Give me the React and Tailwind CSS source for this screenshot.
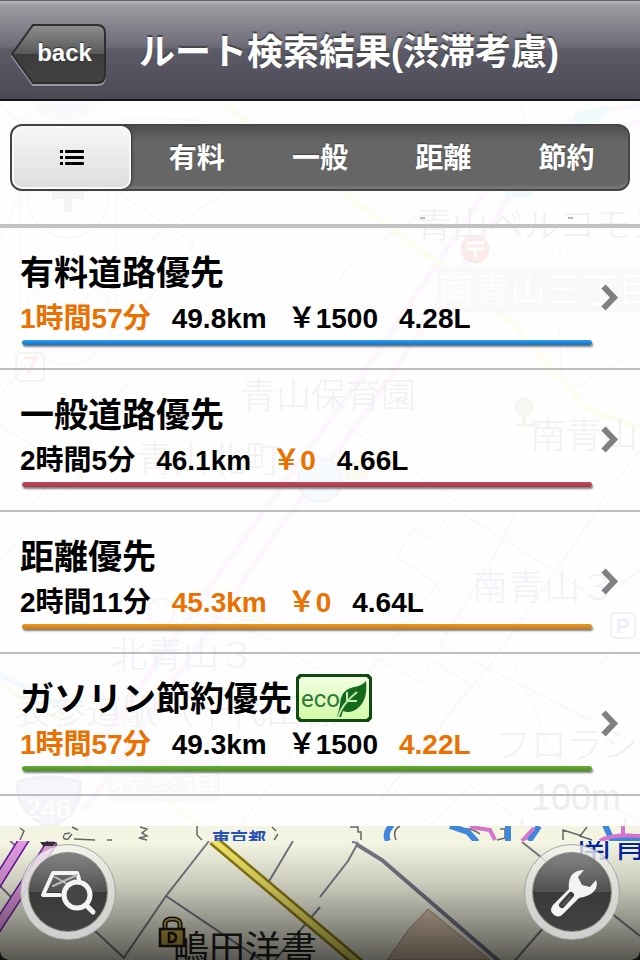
import { useState } from 'react'
import clsx from 'clsx'

const tabs = [
  { id: 'list', label: '一覧' },
  { id: 'toll', label: '有料' },
  { id: 'general', label: '一般' },
  { id: 'distance', label: '距離' },
  { id: 'saving', label: '節約' }
]

const routes = [
  {
    title: '有料道路優先',
    bar: 'from-[#2f9ff0] to-[#0a72c8]',
    info: [
      { text: '1時間57分', best: true },
      { text: '49.8km' },
      { text: '￥1500' },
      { text: '4.28L' }
    ]
  },
  {
    title: '一般道路優先',
    bar: 'from-[#c9485c] to-[#a33a4b]',
    info: [
      { text: '2時間5分' },
      { text: '46.1km' },
      { text: '￥0', best: true },
      { text: '4.66L' }
    ]
  },
  {
    title: '距離優先',
    bar: 'from-[#ec9a26] to-[#c97a10]',
    info: [
      { text: '2時間11分' },
      { text: '45.3km', best: true },
      { text: '￥0', best: true },
      { text: '4.64L' }
    ]
  },
  {
    title: 'ガソリン節約優先',
    bar: 'from-[#62ad34] to-[#4a931f]',
    eco: true,
    info: [
      { text: '1時間57分', best: true },
      { text: '49.3km' },
      { text: '￥1500' },
      { text: '4.22L', best: true }
    ]
  }
]

function FadedMap() {
  return (
    <svg
      className="absolute inset-0 -z-10 h-full w-full"
      viewBox="0 0 640 960"
      preserveAspectRatio="xMidYMin slice"
      fill="none"
      aria-hidden="true"
    >
      {/* minor streets */}
      <g stroke="#f8f8f8" strokeWidth="1.5">
        <path d="M0 105 L18 120 L60 100 M120 118 L200 120 L230 190 L150 240 M60 100 L0 240 M140 310 L194 244 L70 160" />
        <path d="M0 395 L120 260 M0 425 L80 475 L0 560 M20 520 L130 380 M520 105 L530 130" />
        <path d="M330 290 Q360 250 420 215 M560 250 V330 L561 378 M575 388 L640 350 M345 425 L470 510 M595 510 L640 450 M450 512 L433 540 L414 529 L396 557 L438 584 L342 705" />
        <path d="M460 512 L600 600 L640 570 M515 512 L503 540 L440 645 L590 720 M595 514 L490 665 L380 800" strokeWidth="2" />
        <path d="M370 655 L420 682 L432 660 L470 684 L396 790 L430 825 L470 785 L520 820 M505 650 Q530 690 545 740 L590 800 L640 820 M590 680 L620 640" />
        <path d="M240 826 L330 700 M300 820 L320 830 M232 620 L320 670" />
      </g>

      {/* expressway */}
      <g stroke="#fcf7fd" strokeWidth="6">
        <path d="M640 105 Q540 118 500 170 L345 400 L250 530 L60 800" />
        <path d="M640 122 Q560 135 520 180 L375 400 L278 530 L85 810" />
      </g>
      <path d="M575 112 L610 106 L600 122 L575 124 Z M505 185 H532 V197 H505 Z" fill="#f0fafd" />

      {/* yellow road */}
      <path d="M225 105 L440 265 L515 325 Q560 380 590 410 L640 428" stroke="#fcfcf1" strokeWidth="6" />
      <path d="M0 685 L60 720 M160 795 L200 826" stroke="#fcfcf3" strokeWidth="5" />
      <path d="M0 675 L70 710" stroke="#f3f9fd" strokeWidth="6" />

      {/* map controls */}
      <circle cx="66" cy="80" r="36" stroke="#fafafb" strokeWidth="10" fill="#f7f9fe" />
      <circle cx="68" cy="198" r="40" stroke="#f9f9f9" strokeWidth="2" />
      <path d="M52 195 H84 M68 182 V212" stroke="#f4f4f4" strokeWidth="8" />
      <circle cx="68" cy="320" r="44" stroke="#fafafa" strokeWidth="3" />
      <path d="M20 190 V330 M117 190 V330" stroke="#fafafa" strokeWidth="2" />

      {/* markers */}
      <rect x="16" y="353" width="28" height="28" rx="4" stroke="#f2f4f2" strokeWidth="2" />
      <path d="M24 358 H36 L28 374" stroke="#fcf0ed" strokeWidth="3" />
      <circle cx="475" cy="249" r="14" fill="#fdeaea" stroke="#f4ecec" />
      <path d="M467 243 H484 M467 249 H484 M475 249 V258" stroke="#fff" strokeWidth="3" />
      <rect x="437" y="267" width="203" height="46" fill="#f9f9f9" />
      <circle cx="524" cy="407" r="9" fill="#f7f8f2" stroke="#f2f3ec" />
      <path d="M524 415 V425 M516 425 H540" stroke="#f3f4ed" strokeWidth="3" />
      <circle cx="320" cy="480" r="22" fill="#f6fafd" stroke="#f6f6fa" strokeWidth="3" />
      <rect x="346" y="462" width="22" height="17" fill="#fcfbf2" stroke="#f6f5ec" />
      <rect x="242" y="604" width="22" height="17" fill="#fcfbf2" stroke="#f6f5ec" />
      <circle cx="161" cy="612" r="13" stroke="#f7f5f9" strokeWidth="2" />
      <rect x="611" y="613" width="24" height="25" rx="4" stroke="#f1f1f1" strokeWidth="2" />
      <rect x="108" y="760" width="112" height="42" fill="#f9f9f9" />
      <path d="M18 782 Q48 772 80 782 Q84 812 50 828 Q14 812 18 782 Z" fill="#f5f5fa" stroke="#f2f2f6" strokeWidth="3" />
      <path d="M522 826 V818 M625 826 V818" stroke="#f3f3f3" strokeWidth="3" />

      {/* place names */}
      <g className="font-['Noto_Sans_CJK_JP',sans-serif]" fontSize="36" fontWeight="300" fill="#f1f1f1">
        <text x="416" y="238">青山ベルコモンズ</text>
        <text x="438" y="303" fill="#fff">南青山三丁目</text>
        <text x="241" y="408" fontSize="35">青山保育園</text>
        <text x="137" y="472">青山北町</text>
        <text x="530" y="448">南青山</text>
        <text x="472" y="600" fill="#f0f2fa">南青山３</text>
        <text x="111" y="668" fill="#f0f2fa">北青山３</text>
        <text x="14" y="724">表参道駅（千代田線</text>
        <text x="495" y="758">フロラシオン</text>
        <text x="110" y="794" fill="#fff">表参道</text>
      </g>
      <g className="font-['Liberation_Sans',sans-serif]" fill="#ededed">
        <text x="531" y="810" fontSize="36">100m</text>
        <text x="26" y="818" fontSize="27" fill="#fff">246</text>
        <text x="616" y="633" fontSize="20" fontWeight="700" fill="#eceefa">P</text>
      </g>
      <path d="M420 218 H425 M568 218 H573" stroke="#777" />
    </svg>
  )
}

function FooterMap() {
  return (
    <svg
      className="absolute inset-0 h-full w-full"
      viewBox="0 0 640 134"
      preserveAspectRatio="xMidYMin slice"
      fill="none"
      aria-hidden="true"
    >
      <defs>
        <linearGradient id="shade" x1="0" y1="0" x2="0" y2="1">
          <stop offset="0" stopColor="#000" stopOpacity="0" />
          <stop offset="0.35" stopColor="#000" stopOpacity="0.17" />
          <stop offset="1" stopColor="#000" stopOpacity="0.64" />
        </linearGradient>
      </defs>
      <rect width="640" height="134" fill="#f5f5e4" />

      {/* lower tile */}
      <g stroke="#777785" strokeWidth="2">
        <path d="M209 15 L166 70 L123 133 M166 70 L270 140 M93 103 L123 131 M293 15 L268 57 M320 81 L275 134 M10 15 L16 20 M0 60 L12 72" />
        <path d="M358 17 L348 35 L320 71 M352 16 L358 17 M522 16 L640 110 M545 100 L510 140" />
        <path d="M356 18 L382 34 L500 136" strokeWidth="4" />
      </g>
      <path d="M387 134 L409 103 L428 83 L490 134 Z" fill="#d9c3ad" stroke="#a18f7c" />
      <g>
        <path d="M25 12 L-5 60 M53 15 L-6 106" stroke="#6a1b9a" strokeWidth="11" />
        <path d="M25 12 L-5 60 M53 15 L-6 106" stroke="#e39be4" strokeWidth="8" />
        <path d="M40 16 H57 L53 20 H43 Z" fill="#333" />
        <path d="M213 14 L362 140" stroke="#8a7a10" strokeWidth="11" />
        <path d="M213 14 L362 140" stroke="#f0e468" strokeWidth="6" />
      </g>

      {/* tail of the upper tile */}
      <rect width="640" height="15" fill="#f4f4e2" />
      <g stroke="#666" strokeWidth="1.5">
        <path d="M20 2 L24 5 L20 14 M72 1 L78 4 M64 8 L70 7 M64 9 Q62 14 68 13 L72 8 M74 13 L95 14 M107 14 H112 M140 1 L147 3 L142 7 L147 10 L139 12 L147 14 M197 0 V9 L202 14 M272 1 L276 5 M278 8 L274 14 M350 1 H358 V6 H361 V14 M400 0 Q392 4 396 14 M456 4 Q470 0 480 8 M500 3 H505 V12 L497 14 M563 14 V4 L582 10 M587 1 L580 10 L592 14" />
      </g>
      <svg width="640" height="15" viewBox="0 0 640 15">
        <path d="M392 -1 Q384 7 388 15 M450 0 L468 6 L477 16 M508 0 V15 M539 0 L529 15 M605 -1 L612 14 L640 13" stroke="#3f86dc" strokeWidth="6" />
        <path d="M470 1 L490 4 L495 14 M534 2 L522 15 M623 0 V10 M600 15 Q610 8 640 10" stroke="#d573cd" strokeWidth="4" />
      </svg>
      <svg x="205" y="0" width="70" height="15" viewBox="0 0 70 15">
        <text className="font-['Noto_Sans_CJK_JP',sans-serif]" x="7" y="20" fontSize="18" fontWeight="700" fill="#2450b8">東京都</text>
      </svg>

      {/* names */}
      <svg x="570" y="15" width="70" height="22" viewBox="0 0 70 22">
        <text className="font-['Noto_Sans_CJK_JP',sans-serif]" x="6" y="16" fontSize="36" fill="#0022a8">南青</text>
      </svg>
      <text className="font-['Noto_Sans_CJK_JP',sans-serif]" x="173" y="136" fontSize="36" fill="#222">嶋田洋書</text>

      <g stroke="#1a1a1a" strokeWidth="2.5">
        <path d="M165 102 V97 Q166 93 172 93 Q179 93 180 97 V102" strokeWidth="5" />
        <path d="M165 102 V97 Q166 93 172 93 Q179 93 180 97 V102" stroke="#c9a63e" strokeWidth="2" />
        <rect x="160" y="103" width="24" height="17" fill="#c9a63e" />
        <path d="M169 107 V116 H172 Q176 115 176 111.500 Q176 108 172 107 Z" />
      </g>

      <rect y="15" width="640" height="119" fill="url(#shade)" />
      <path d="M0 125 Q1 133 9 134 H0 Z M640 125 Q639 133 631 134 H640 Z" fill="#111" />
    </svg>
  )
}

function RoundButton({ label, children }) {
  return (
    <button
      aria-label={label}
      className="relative flex size-24 items-center justify-center rounded-full border border-[#a5a59c] bg-linear-to-b from-[#f6f6f2]/75 via-[#dcdcdc]/90 to-[#cfcfcf]"
    >
      <span className="size-20 rounded-full border border-[#8d8d76] bg-[linear-gradient(#868686,#505050_50%,#3a3a3a_50%,#424242)] shadow-inner" />
      <svg className="absolute inset-0 size-24" viewBox="0 0 96 96" fill="none" aria-hidden="true">
        {children}
      </svg>
    </button>
  )
}

function EcoBadge() {
  return (
    <svg className="ml-1 h-12 w-[76px]" viewBox="0 0 76 48" fill="none">
      <defs>
        <linearGradient id="ecoBg" x1="0" y1="0" x2="0" y2="1">
          <stop offset="0" stopColor="#f4ffe4" />
          <stop offset="1" stopColor="#d3fba6" />
        </linearGradient>
      </defs>
      <path d="M4 1.500 H72 L74.500 4 V44 L72 46.500 H4 L1.500 44 V4 Z" fill="url(#ecoBg)" stroke="#0e4a12" strokeWidth="3" />
      <path d="M2 5 L5 2 M71 2 L74 5 M2 43 L5 46 M71 46 L74 43" stroke="#0e4a12" strokeWidth="2" />
      <text className="font-['Roboto',sans-serif]" x="5" y="33" fontSize="24" fill="#2c7a34">eco</text>
      <path d="M70 7 Q66 12 58 13 Q44 16 44 31 L41 43 L45 43 L47 37 Q55 40 62 34 Q72 26 70 7 Z" fill="#146a1c" />
      <path d="M42 43 Q46 30 61 18 M51 27 L51 18 M50 27 L61 27" stroke="#c4e9b0" strokeWidth="2" />
    </svg>
  )
}

function RouteRow({ route }) {
  return (
    <li className="border-b-2 border-[#bdbdbd]">
      <a href="#" className="flex items-center pt-5 pb-[23px] pl-5">
        <div className="flex-1">
          <div className="flex h-12 items-center">
            <h2 className="pt-[2px] text-[34px] leading-[48px] font-bold whitespace-nowrap">{route.title}</h2>
            {route.eco && <EcoBadge />}
          </div>
          <div className="mt-[5px] flex gap-[21px] text-[28px] leading-9 font-bold whitespace-nowrap [font-kerning:none]">
            {route.info.map((item) => (
              <span key={item.text} className={clsx(item.best && 'text-[#ea7000]')}>
                {item.text}
              </span>
            ))}
          </div>
          <div className={clsx('mt-[3px] ml-[2px] h-[5px] rounded-sm bg-linear-to-b shadow-[1px_2px_2px_rgba(0,0,0,0.5)]', route.bar)} />
        </div>
        <svg className="mr-5 ml-2 h-7 w-5" viewBox="0 0 20 28" fill="none" aria-hidden="true">
          <path d="M3.500 3.500 L14 14.500 L3.500 25.500" stroke="#808080" strokeWidth="6" />
        </svg>
      </a>
    </li>
  )
}

export default function App() {
  const [active, setActive] = useState('list')

  return (
    <div className="relative isolate flex min-h-screen flex-col overflow-hidden bg-[#fefefe] font-['Liberation_Sans','Noto_Sans_CJK_JP',sans-serif] text-black">
      <FadedMap />

      {/* Title bar */}
      <header className="flex h-[101px] items-center border-t border-b-2 border-t-[#5b5f6b] border-b-[#15151c] bg-[linear-gradient(#b9b8bd,#9c9ca1_4px,#6c6b78_47%,#5c5b68_49%,#4b4a54)] pt-[10px] pl-[11px]">
        <button className="relative flex h-[62px] w-[95px] items-center justify-center pb-1 pl-3 text-[24px] leading-8 font-bold text-white text-shadow-[0_-1px_1px_#333]">
          <svg className="absolute inset-0 h-full w-full" viewBox="0 0 95 62" fill="none" aria-hidden="true">
            <defs>
              <linearGradient id="backBg" x1="0" y1="0" x2="0" y2="1">
                <stop offset="0" stopColor="#8e8e8e" />
                <stop offset="0.5" stopColor="#585858" />
                <stop offset="0.5" stopColor="#3c3c3c" />
                <stop offset="1" stopColor="#424242" />
              </linearGradient>
            </defs>
            <path d="M22 2 H86 Q94 2 94 10 V53 Q94 61 86 61 H22 L1 32 Z" stroke="#9a99a4" strokeWidth="2" />
            <path d="M22 1 H86 Q94 1 94 9 V51 Q94 59 86 59 H22 L1 30 Z" fill="url(#backBg)" stroke="#2e2e2e" strokeWidth="2" />
          </svg>
          <span className="relative">back</span>
        </button>
        <h1 className="ml-[33px] pb-1 text-[36px] leading-[48px] font-bold whitespace-nowrap text-white text-shadow-[0_-2px_1px_#444]">
          ルート検索結果(渋滞考慮)
        </h1>
      </header>

      {/* Sort tabs */}
      <nav className="mx-[10px] mt-[23px] grid h-[67px] grid-cols-5 rounded-xl border-2 border-[#474747] bg-[linear-gradient(#505050,#666_16px)] shadow-[inset_0_-3px_2px_#777]">
        {tabs.map((tab) => (
          <button
            key={tab.id}
            aria-label={tab.label}
            aria-pressed={active === tab.id}
            onClick={() => setActive(tab.id)}
            className={clsx(
              'flex items-center justify-center rounded-[10px] text-[28px] leading-9 font-bold',
              active === tab.id
                ? 'mr-1 border-2 border-[#fafafa] bg-linear-to-b from-[#f6f6f6] to-[#dedede] text-black shadow-[1px_0_3px_#333]'
                : 'pt-[2px] text-white text-shadow-[0_-1px_1px_#444]'
            )}
          >
            {tab.id === 'list' ? (
              <svg className="h-[18px] w-6" viewBox="0 0 24 18" aria-hidden="true">
                <path d="M0 1 H3 V4 H0 Z M0 7 H3 V10 H0 Z M0 13 H3 V16 H0 Z" />
                <rect x="5" y="1" width="19" height="3" rx="1" />
                <rect x="5" y="7" width="19" height="3" rx="1" />
                <rect x="5" y="13" width="19" height="3" rx="1" />
              </svg>
            ) : (
              tab.label
            )}
          </button>
        ))}
      </nav>

      {/* Results */}
      <ul className="mt-[33px] border-t-4 border-[#c2c2c2]">
        {routes.map((route) => (
          <RouteRow key={route.title} route={route} />
        ))}
      </ul>

      {/* Map toolbar */}
      <footer className="relative mt-[30px] flex min-h-[134px] flex-1 items-start justify-between px-5 pt-[18px]">
        <FooterMap />
        <RoundButton label="地図検索">
          <g stroke="#f4f4f4" strokeLinejoin="round" strokeLinecap="round">
            <path d="M58 34 L56 28 H32 L22 50 H39" strokeWidth="4" />
            <path d="M34 32 L48 40 M32 41 L56 30" strokeWidth="2" stroke="#bbb" />
            <circle cx="56" cy="50" r="13" strokeWidth="5" fill="#454545" />
            <path d="M66 61 L72 67" strokeWidth="5" />
          </g>
        </RoundButton>
        <RoundButton label="設定">
          <path
            d="M59 25 L53 32 L57 40 L65 42 L71 35 Q73 40 70 45 Q66 51 54 53 L38 69 Q33 74 28 69 Q24 65 28 60 L44 44 Q43 37 46 31 Q50 25 59 25 Z"
            fill="#f4f4f4"
          />
          <path d="M46 50 L37 60" stroke="#3c3c3c" strokeWidth="6" strokeLinecap="round" />
          <path d="M45 52 L38 60" stroke="#555" strokeWidth="2" strokeLinecap="round" />
        </RoundButton>
      </footer>
    </div>
  )
}
